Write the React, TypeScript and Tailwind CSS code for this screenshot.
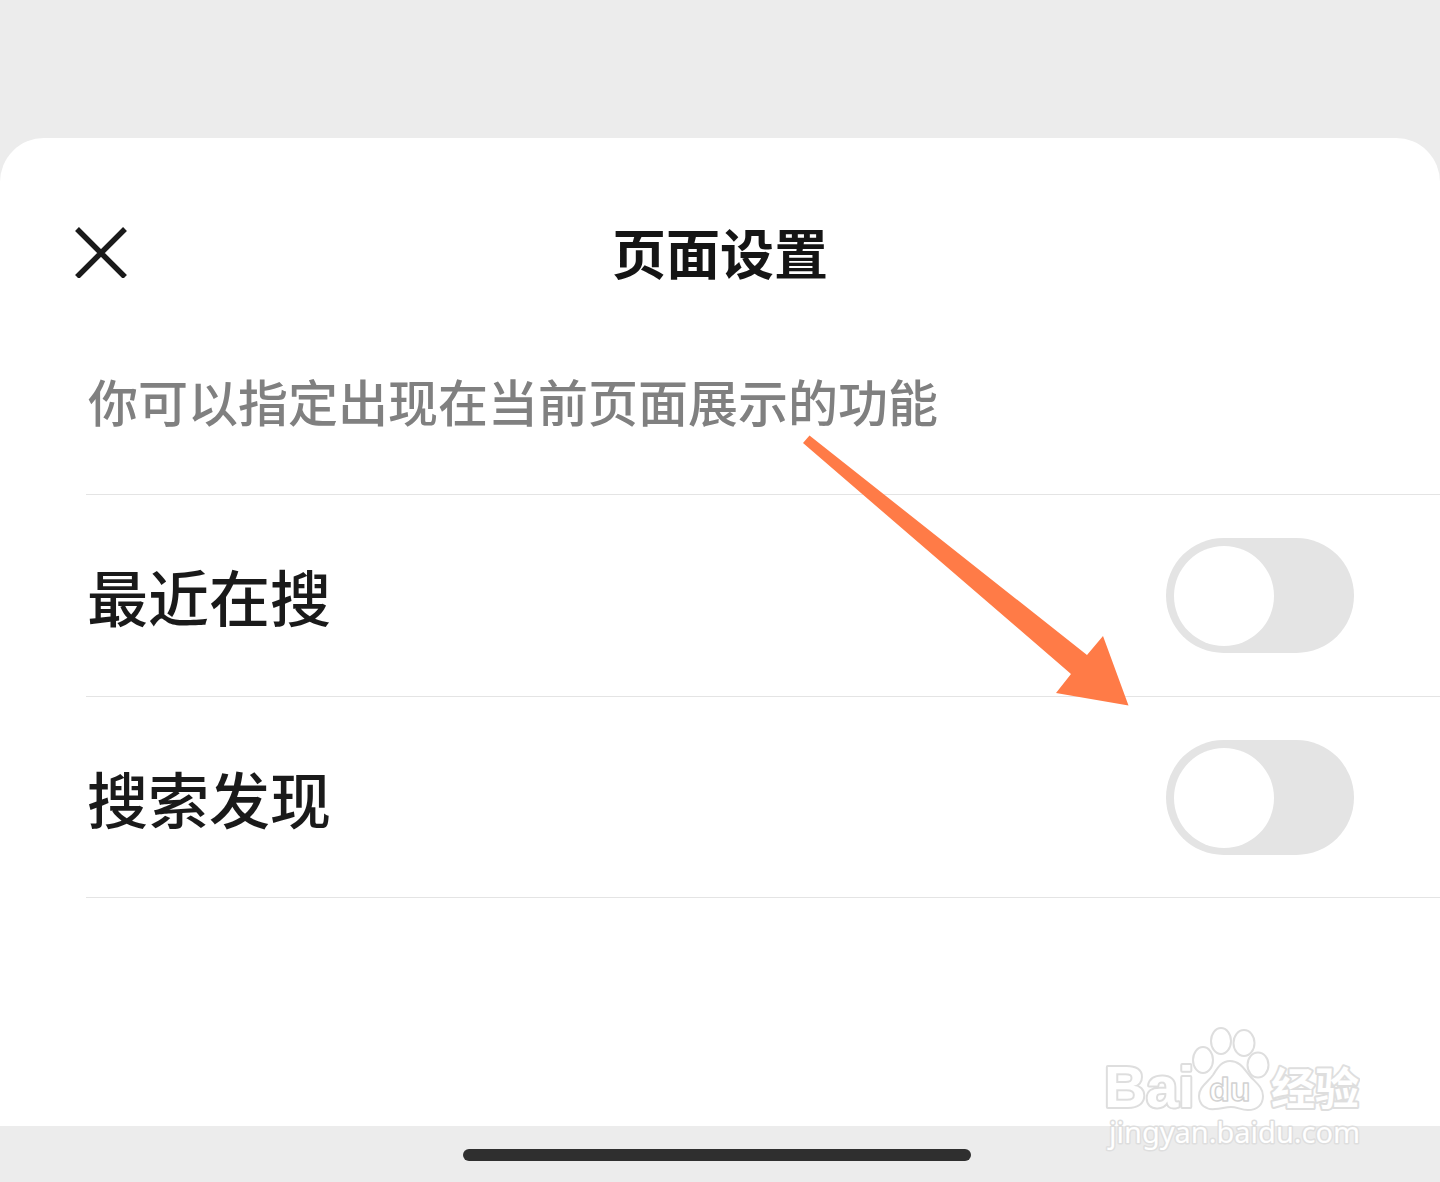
import { useState } from "react";

function CloseIcon() {
  return (
    <svg viewBox="0 0 52 52" className="size-[52px]" fill="none" stroke="#1a1a1a" strokeWidth="5.500" aria-hidden="true">
      <path d="M2 3 50 51M50 3 2 51" />
    </svg>
  );
}

function PointerArrow() {
  return (
    <svg
      viewBox="0 0 326 271"
      className="pointer-events-none absolute top-[297px] right-[311px] h-[271px] w-[326px]"
      fill="#ff7b47"
      aria-hidden="true"
    >
      <path d="M6.500 .5 284 220 300 201 325.500 270.500 253 258 268 239 0 8Z" />
    </svg>
  );
}

function Watermark() {
  return (
    <svg
      viewBox="0 0 270 132"
      className="pointer-events-none absolute right-[80px] bottom-[25px] h-[132px] w-[270px]"
      fill="#fff"
      stroke="#dedede"
      strokeWidth="2"
      strokeLinejoin="round"
      role="img"
      aria-label="Baidu 经验 jingyan.baidu.com"
    >
      <text x="14" y="82" fontSize="58" fontFamily="'Liberation Sans', Arial, sans-serif" fontWeight="700" paintOrder="stroke" strokeWidth="4">Bai</text>
      <ellipse cx="113" cy="35" rx="10" ry="13" />
      <ellipse cx="131" cy="16" rx="10" ry="13" />
      <ellipse cx="154" cy="18" rx="10.500" ry="13" />
      <ellipse cx="168" cy="40" rx="10.500" ry="12.500" />
      <path d="M140 36C131 36 127 44 123 50C118 57 109 62 109 71C109 80 116 85 125 84C131 84 135 82 141 82C147 82 151 85 158 85C167 85 173 80 173 71C173 62 165 57 160 51C154 44 150 36 140 36Z" />
      <text x="119" y="76" fontSize="34" fontFamily="'Liberation Sans', Arial, sans-serif" fontWeight="700" stroke="#d2d2d2" strokeWidth="1.500">du</text>
      <text x="181" y="80" fontSize="44" fontFamily="'Noto Sans CJK SC', sans-serif" fontWeight="700" paintOrder="stroke" strokeWidth="4">经验</text>
      <text x="19" y="118" fontSize="29" fontFamily="'Noto Sans', sans-serif" fontWeight="400" paintOrder="stroke" strokeWidth="3">jingyan.baidu.com</text>
    </svg>
  );
}

function SettingRow({ id, label }: { id: string; label: string }) {
  const [on, setOn] = useState(false);
  return (
    <li className="flex items-center justify-between border-b border-[#e4e4e4] pt-[43px] pr-[86px] pb-[43px] pl-px last:pb-[42px]">
      <label htmlFor={id} className="text-[61px] leading-[72px] font-medium text-[#1a1a1a]">
        {label}
      </label>
      <input
        id={id}
        type="checkbox"
        role="switch"
        checked={on}
        onChange={(e) => setOn(e.target.checked)}
        className="flex h-[115px] w-[188px] shrink-0 cursor-pointer appearance-none items-center rounded-full bg-[#e4e4e4] px-2 before:size-[100px] before:rounded-full before:bg-white before:content-[''] checked:justify-end checked:bg-[#ff7b47]"
      />
    </li>
  );
}

export default function App() {
  return (
    <div className="relative flex min-h-screen flex-col bg-[#ececec] pt-[138px] font-['Noto_Sans_CJK_SC',sans-serif]">
      <main className="relative flex-1 rounded-t-[44px] bg-white pt-[78px]">
        <header className="grid grid-cols-[52px_1fr_52px] items-center px-[75px]">
          <button type="button" aria-label="关闭" className="cursor-pointer">
            <CloseIcon />
          </button>
          <h1 className="text-center text-[54px] leading-[72px] font-bold text-[#151515]">页面设置</h1>
        </header>
        <div className="pt-[76px] pl-[86px]">
          <p className="pb-[58px] pl-0.5 text-[50px] leading-[72px] font-medium text-[#808080]">
            你可以指定出现在当前页面展示的功能
          </p>
          <ul className="border-t border-[#e4e4e4]">
            <SettingRow id="recent" label="最近在搜" />
            <SettingRow id="discover" label="搜索发现" />
          </ul>
        </div>
        <PointerArrow />
      </main>
      <footer className="flex h-14 justify-center pt-[23px] pr-1.5">
        <div className="h-3 w-[508px] rounded-full bg-[#2f2f2f]" />
      </footer>
      <Watermark />
    </div>
  );
}
